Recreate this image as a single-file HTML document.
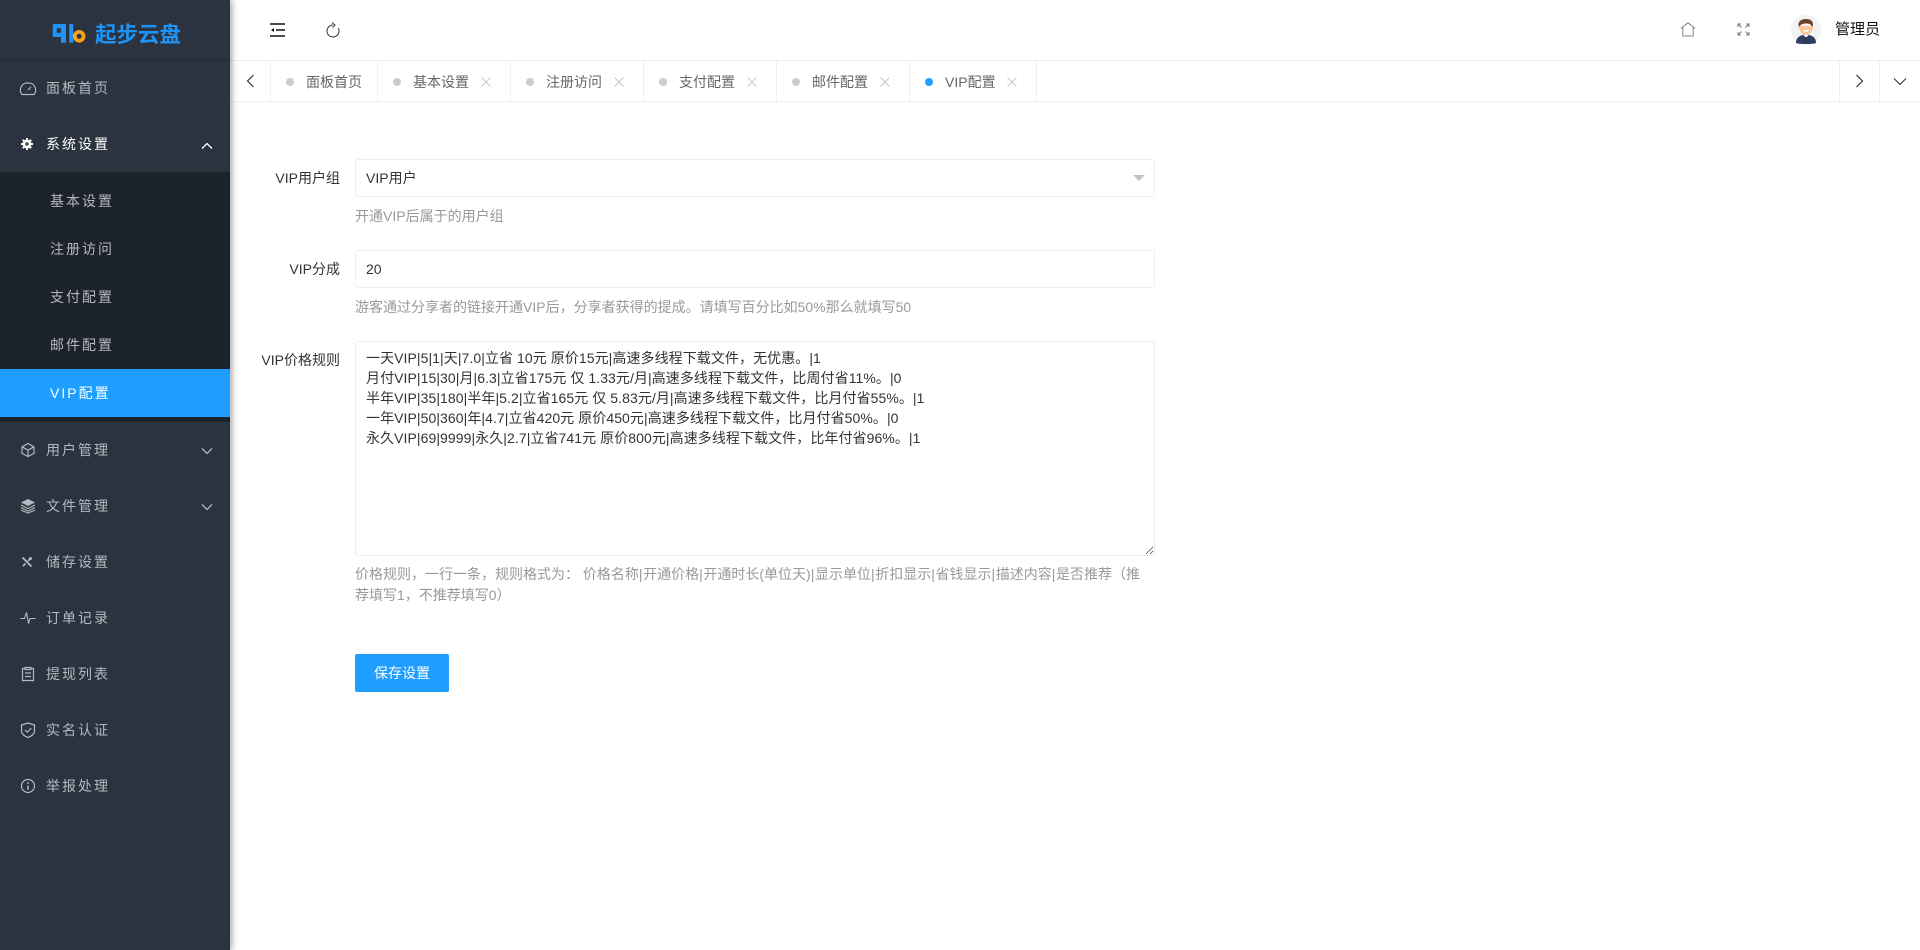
<!DOCTYPE html>
<html lang="zh-CN">
<head>
<meta charset="utf-8">
<title>VIP配置</title>
<style>
*{box-sizing:border-box}
html,body{margin:0;padding:0;width:1920px;height:950px;overflow:hidden;background:#fff;font-family:"Liberation Sans","Noto Sans CJK SC",sans-serif;font-size:14px;color:#333}
.abs{position:absolute}
#side{position:absolute;left:0;top:0;width:230px;height:950px;background:#2a333f;box-shadow:2px 0 6px rgba(0,0,0,.35);z-index:5}
#logo{position:absolute;left:0;top:0;width:230px;height:60px;border-bottom:1px solid #232b35}
#logotxt{position:absolute;left:95px;top:20px;font-size:21.500px;line-height:30px;font-weight:bold;color:#1f93f5;white-space:nowrap;letter-spacing:0}
.mi{position:absolute;left:46px;font-size:14px;line-height:20px;letter-spacing:2px;color:#b4b9be;white-space:nowrap}
.si{position:absolute;left:50px;font-size:14px;line-height:20px;letter-spacing:2px;color:#b4b9be;white-space:nowrap}
#sub{position:absolute;left:0;top:172px;width:230px;height:250px;background:#1c232b}
#act{position:absolute;left:0;top:369px;width:230px;height:48px;background:#1e9fff}
.ic{position:absolute;left:20px;width:16px;height:16px}
.chev{position:absolute;left:200px;width:14px;height:10px}
#hd{position:absolute;left:230px;top:0;width:1690px;height:61px;border-bottom:1px solid #f0f0f0}
#tabs{position:absolute;left:230px;top:61px;width:1690px;height:41px;border-bottom:1px solid #f0f0f0}
.sep{position:absolute;top:61px;width:1px;height:42px;background:#f0f0f0}
.dot{position:absolute;top:78px;width:8px;height:8px;border-radius:50%;background:#ccc}
.tt{position:absolute;top:72px;font-size:14px;line-height:20px;color:#666;white-space:nowrap}
.x{position:absolute;top:76px;width:12px;height:12px}
.lab{position:absolute;right:1580px;font-size:14px;line-height:20px;color:#333;white-space:nowrap}
.box{position:absolute;left:355px;width:800px;border:1px solid #eee;border-radius:3px;background:#fff;padding-left:10px;font-size:14px;color:#333}
.help{position:absolute;left:355px;width:800px;font-size:14px;line-height:21px;color:#999}
.help i{font-style:normal;letter-spacing:.6px}
textarea{position:absolute;left:355px;top:341px;width:800px;height:215px;border:1px solid #eee;border-radius:3px;padding:6px 10px;font:14px/20px "Liberation Sans","Noto Sans CJK SC",sans-serif;letter-spacing:.07px;color:#333;background:#fff;outline:0;overflow:hidden;resize:vertical;margin:0}
#btn{position:absolute;left:355px;top:654px;width:94px;height:38px;background:#1e9fff;border-radius:2px;color:#fff;font-size:14px;line-height:38px;text-align:center}
svg{display:block;overflow:visible}
</style>
</head>
<body>

<div id="side">
  <div id="logo">
    <svg class="abs" style="left:52px;top:24px" width="35" height="21" viewBox="0 0 35 21">
      <path fill-rule="evenodd" d="M2.500 0H14V18.700H9V13H.7V2Q.7 0 2.500 0ZM4.700 4.300V8.700H9V4.300Z" fill="#1f93f5"/>
      <path d="M19.300 0V18.700" fill="none" stroke="#1f93f5" stroke-width="4"/>
      <circle cx="27.200" cy="12.300" r="4.400" fill="none" stroke="#f5a11c" stroke-width="3.800"/>
    </svg>
    <div id="logotxt">起步云盘</div>
  </div>

  <svg class="ic" style="top:80px" viewBox="0 0 16 16" fill="none" stroke="#b4b9be" stroke-width="1.200"><path d="M2 14.500A7 7 0 0 1 8 3a7 7 0 0 1 6 11.500z"/><path d="M8 10l3-3"/></svg>
  <div class="mi" style="top:78px">面板首页</div>

  <svg class="abs" style="left:21px;top:138px" width="12" height="12" viewBox="0 0 12 12"><circle cx="6" cy="6" r="4.400" fill="#fff"/><path d="M6 0V12M0 6H12M1.800 1.800L10.200 10.200M10.200 1.800L1.800 10.200" stroke="#fff" stroke-width="1.900"/><circle cx="6" cy="6" r="1.700" fill="#39424d"/></svg>
  <div class="mi" style="top:134px;color:#fff">系统设置</div>
  <svg class="chev" style="top:141px" viewBox="0 0 14 10" fill="none" stroke="#fff" stroke-width="1.300"><path d="M2 7.500L7 2.500L12 7.500"/></svg>

  <div id="sub"></div>
  <div class="si" style="top:191px">基本设置</div>
  <div class="si" style="top:239px">注册访问</div>
  <div class="si" style="top:287px">支付配置</div>
  <div class="si" style="top:335px">邮件配置</div>
  <div id="act"></div>
  <div class="si" style="top:383px;color:#fff">VIP配置</div>

  <svg class="ic" style="top:442px" viewBox="0 0 16 16" fill="none" stroke="#b4b9be" stroke-width="1.200"><path d="M8 1.500l6 3.300v6.500l-6 3.300-6-3.300V4.800zM2 4.800l6 3.400 6-3.400M8 8.200v6.400"/></svg>
  <div class="mi" style="top:440px">用户管理</div>
  <svg class="chev" style="top:446px" viewBox="0 0 14 10" fill="none" stroke="#b4b9be" stroke-width="1.300"><path d="M2 2.500L7 7.500L12 2.500"/></svg>

  <svg class="ic" style="top:498px" viewBox="0 0 16 16"><path d="M8 1L15 4.500 8 8 1 4.500z" fill="#b4b9be"/><path d="M1 7l7 3.500L15 7M1 9.500L8 13l7-3.500M1 12l7 3 7-3" fill="none" stroke="#b4b9be" stroke-width="1.100"/></svg>
  <div class="mi" style="top:496px">文件管理</div>
  <svg class="chev" style="top:502px" viewBox="0 0 14 10" fill="none" stroke="#b4b9be" stroke-width="1.300"><path d="M2 2.500L7 7.500L12 2.500"/></svg>

  <svg class="abs" style="left:21px;top:556px" width="12" height="12" viewBox="0 0 12 12" fill="none" stroke="#b4b9be" stroke-width="1.800"><path d="M1.500 1.500L10.500 10.500M10 2L7 5M2 10L4.500 7.500"/><circle cx="9.500" cy="2.500" r="1.500" fill="#b4b9be" stroke="none"/></svg>
  <div class="mi" style="top:552px">储存设置</div>

  <svg class="ic" style="top:610px" viewBox="0 0 16 16" fill="none" stroke="#b4b9be" stroke-width="1.100"><path d="M.5 8.500H4.500L6.500 2.500 8.500 13.500 10 8.500H15.500"/></svg>
  <div class="mi" style="top:608px">订单记录</div>

  <svg class="ic" style="top:666px" viewBox="0 0 16 16" fill="none" stroke="#b4b9be" stroke-width="1.200"><path d="M5 2.500H2.500V14.500H13.500V2.500H11M5 1.500H11V3.500H5zM5 7H11M5 10.500H11"/></svg>
  <div class="mi" style="top:664px">提现列表</div>

  <svg class="ic" style="top:722px" viewBox="0 0 16 16" fill="none" stroke="#b4b9be" stroke-width="1.200"><path d="M8 1L14.500 3V9C14.500 12 11 14.500 8 15.500 5 14.500 1.500 12 1.500 9V3z"/><path d="M5 8l2.300 2.300L11.300 6"/></svg>
  <div class="mi" style="top:720px">实名认证</div>

  <svg class="ic" style="top:778px" viewBox="0 0 16 16" fill="none" stroke="#b4b9be" stroke-width="1.200"><circle cx="8" cy="8" r="6.500"/><path d="M8 4.300V6M8 7.500V11.800" stroke-width="1.500"/></svg>
  <div class="mi" style="top:776px">举报处理</div>
</div>

<div id="hd"></div>
<svg class="abs" style="left:270px;top:23px" width="15" height="14" viewBox="0 0 15 14" fill="none" stroke="#111" stroke-width="1.500"><path d="M0 1H15M6 7H15M0 13H15"/><path d="M1 7L4 5V9z" fill="#111" stroke="none"/></svg>
<svg class="abs" style="left:326px;top:23px" width="14" height="15" viewBox="0 0 14 15" fill="none" stroke="#333" stroke-width="1"><path d="M12.200 5A6 6 0 1 1 7 2"/><path d="M6 -.5L9 2 6.500 4.500"/></svg>

<svg class="abs" style="left:1680px;top:22px" width="16" height="15" viewBox="0 0 16 15" fill="none" stroke="#888" stroke-width="1"><path d="M.8 6.500L8 .8l7.200 5.700M2.800 5.500V14H13.200V5.500"/></svg>
<svg class="abs" style="left:1737px;top:23px" width="13" height="13" viewBox="0 0 13 13" fill="none" stroke="#777" stroke-width="1"><path d="M1 4V1H4M9 1H12V4M1 9V12H4M12 9V12H9M1 1L4.500 4.500M12 1L8.500 4.500M1 12L4.500 8.500M12 12L8.500 8.500"/></svg>

<svg class="abs" style="left:1791px;top:15px" width="30" height="30" viewBox="0 0 30 30">
  <circle cx="15" cy="15" r="15" fill="#f3f3f3"/>
  <path d="M5 28c0-5 3-7 7-8h6c4 1 7 3 7 8-3 1-6 1-10 1s-7 0-10-1z" fill="#2c3e64"/>
  <path d="M12.500 20L15 23l2.500-3z" fill="#fff"/><path d="M14.300 22h1.400l.5 5h-2.400z" fill="#333"/>
  <path d="M8 11c0 6 3.500 9 7 9s7-3 7-9z" fill="#f6c79b"/>
  <path d="M7.500 11c-.5-5 3-7 7.500-7 4 0 7.500 1.500 7 7l-1 .5c-1-2-2-3-6-3s-5 1-6.500 3z" fill="#6b4226"/>
  <path d="M12 15h6c-.5 2.500-5.500 2.500-6 0z" fill="#fff"/>
</svg>
<div class="abs" style="left:1835px;top:20px;font-size:15px;line-height:20px;color:#111;white-space:nowrap">管理员</div>

<div id="tabs"></div>
<svg class="abs" style="left:246px;top:74px" width="9" height="14" viewBox="0 0 9 14" fill="none" stroke="#333" stroke-width="1.200"><path d="M7.500 1L1.500 7l6 6"/></svg>
<div class="sep" style="left:270px"></div>
<div class="sep" style="left:377px"></div>
<div class="sep" style="left:510px"></div>
<div class="sep" style="left:643px"></div>
<div class="sep" style="left:776px"></div>
<div class="sep" style="left:909px"></div>
<div class="sep" style="left:1036px"></div>
<div class="sep" style="left:1839px"></div>
<div class="sep" style="left:1879px"></div>

<div class="dot" style="left:286px"></div><div class="tt" style="left:306px">面板首页</div>

<div class="dot" style="left:393px"></div><div class="tt" style="left:413px">基本设置</div>
<svg class="x" style="left:480px" viewBox="0 0 12 12" stroke="#c8c8c8" stroke-width="1"><path d="M1.500 1.500l9 9M10.500 1.500l-9 9"/></svg>

<div class="dot" style="left:526px"></div><div class="tt" style="left:546px">注册访问</div>
<svg class="x" style="left:613px" viewBox="0 0 12 12" stroke="#c8c8c8" stroke-width="1"><path d="M1.500 1.500l9 9M10.500 1.500l-9 9"/></svg>

<div class="dot" style="left:659px"></div><div class="tt" style="left:679px">支付配置</div>
<svg class="x" style="left:746px" viewBox="0 0 12 12" stroke="#c8c8c8" stroke-width="1"><path d="M1.500 1.500l9 9M10.500 1.500l-9 9"/></svg>

<div class="dot" style="left:792px"></div><div class="tt" style="left:812px">邮件配置</div>
<svg class="x" style="left:879px" viewBox="0 0 12 12" stroke="#c8c8c8" stroke-width="1"><path d="M1.500 1.500l9 9M10.500 1.500l-9 9"/></svg>

<div class="dot" style="left:925px;background:#1e9fff"></div><div class="tt" style="left:945px">VIP配置</div>
<svg class="x" style="left:1006px" viewBox="0 0 12 12" stroke="#c8c8c8" stroke-width="1"><path d="M1.500 1.500l9 9M10.500 1.500l-9 9"/></svg>

<svg class="abs" style="left:1855px;top:74px" width="9" height="14" viewBox="0 0 9 14" fill="none" stroke="#333" stroke-width="1.200"><path d="M1.500 1l6 6-6 6"/></svg>
<svg class="abs" style="left:1893px;top:77px" width="14" height="9" viewBox="0 0 14 9" fill="none" stroke="#333" stroke-width="1.100"><path d="M1 1.500l6 6 6-6"/></svg>

<div class="lab" style="top:168px">VIP用户组</div>
<div class="box" style="top:159px;height:38px;line-height:36px">VIP用户</div>
<div class="abs" style="left:1133px;top:175px;width:0;height:0;border-left:6px solid transparent;border-right:6px solid transparent;border-top:6px solid #c2c2c2"></div>
<div class="help" style="top:206px">开通VIP后属于的用户组</div>

<div class="lab" style="top:259px">VIP分成</div>
<div class="box" style="top:250px;height:38px;line-height:36px">20</div>
<div class="help" style="top:297px">游客通过分享者的链接开通VIP后，分享者获得的提成。请填写百分比如50%那么就填写50</div>

<div class="lab" style="top:350px">VIP价格规则</div>
<textarea spellcheck="false">一天VIP|5|1|天|7.0|立省 10元 原价15元|高速多线程下载文件，无优惠。|1
月付VIP|15|30|月|6.3|立省175元 仅 1.33元/月|高速多线程下载文件，比周付省11%。|0
半年VIP|35|180|半年|5.2|立省165元 仅 5.83元/月|高速多线程下载文件，比月付省55%。|1
一年VIP|50|360|年|4.7|立省420元 原价450元|高速多线程下载文件，比月付省50%。|0
永久VIP|69|9999|永久|2.7|立省741元 原价800元|高速多线程下载文件，比年付省96%。|1</textarea>
<div class="help" style="top:564px">价格规则，一行一条，规则格式为： 价格名称<i>|</i>开通价格<i>|</i>开通时长(单位天)<i>|</i>显示单位<i>|</i>折扣显示<i>|</i>省钱显示<i>|</i>描述内容<i>|</i>是否推荐（推<br>荐填写1，不推荐填写0）</div>

<div id="btn">保存设置</div>

</body>
</html>
